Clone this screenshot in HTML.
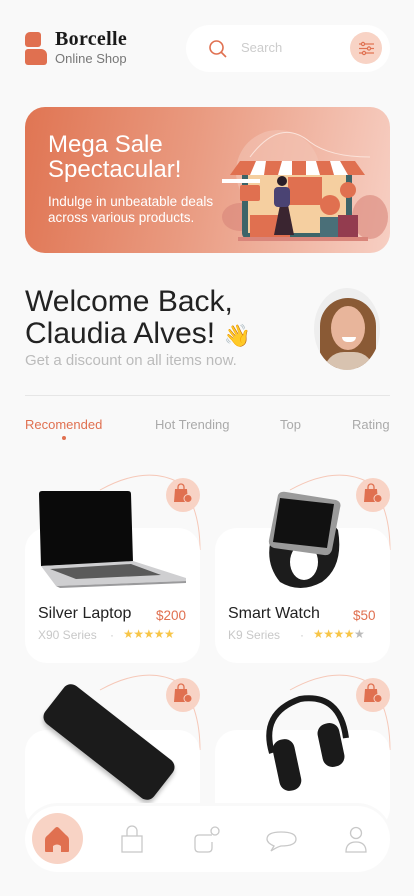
<!DOCTYPE html>
<html><head><meta charset="utf-8"><style>
*{margin:0;padding:0;box-sizing:border-box}
body{width:414px;height:896px;background:#f9f9f9;font-family:"Liberation Sans",sans-serif;position:relative;overflow:hidden}
.a{position:absolute}
.card{position:absolute;background:#fff;border-radius:22px}
.bag{position:absolute;width:34px;height:34px;border-radius:50%;background:#f8d3c5}
.nm{font-size:16px;color:#222}
.pr{font-size:13.5px;color:#e07050}
.sr{font-size:12px;color:#c8c8c8}
.st{font-size:12px;color:#f7c548;letter-spacing:-0.5px}
.tab{position:absolute;top:417px;font-size:13px;color:#aaa}
</style></head><body>
<div class="a" style="left:25px;top:32px;width:16px;height:15px;background:#e07050;border-radius:5px 3px 3px 3px"></div>
<div class="a" style="left:25px;top:49px;width:22px;height:16px;background:#e07050;border-radius:3px 6px 3px 3px"></div>
<div class="a" style="left:55px;top:28px;font-family:'Liberation Serif',serif;font-weight:bold;font-size:20px;color:#1a1a1a;letter-spacing:0.3px">Borcelle</div>
<div class="a" style="left:55px;top:51px;font-size:13px;color:#777">Online Shop</div>
<div class="a" style="left:186px;top:25px;width:204px;height:47px;background:#fff;border-radius:24px"></div>
<svg class="a" style="left:208px;top:39px" width="20" height="20"><circle cx="8.5" cy="8.5" r="6.5" fill="none" stroke="#e07050" stroke-width="1.6"/><line x1="13" y1="13" x2="18" y2="18" stroke="#e07050" stroke-width="1.6"/></svg>
<div class="a" style="left:241px;top:40px;font-size:13px;color:#ccc">Search</div>
<div class="a" style="left:350px;top:32px;width:32px;height:32px;border-radius:50%;background:#f8d3c5"></div>
<svg class="a" style="left:358px;top:41px" width="17" height="15" stroke="#e07050" stroke-width="1.2" fill="#f8d3c5"><line x1="1" y1="3" x2="16" y2="3"/><line x1="1" y1="7.5" x2="16" y2="7.5"/><line x1="1" y1="12" x2="16" y2="12"/><circle cx="5" cy="3" r="1.6"/><circle cx="11" cy="7.5" r="1.6"/><circle cx="6" cy="12" r="1.6"/></svg>
<div class="a" style="left:25px;top:107px;width:365px;height:146px;border-radius:20px;background:linear-gradient(100deg,#e07553 0%,#e99a80 45%,#f7cfc3 100%);overflow:hidden">
 <div class="a" style="left:23px;top:25px;font-size:24px;line-height:25px;color:#fff">Mega Sale<br>Spectacular!</div>
 <div class="a" style="left:23px;top:87px;font-size:13.5px;line-height:16px;color:#fff">Indulge in unbeatable deals<br>across various products.</div>
 <svg class="a" style="left:195px;top:10px" width="170" height="130">
  <circle cx="58" cy="55" r="42" fill="#f4c4b5" opacity=".6"/>
  <path d="M30,40 Q60,0 90,25 Q110,40 150,40" fill="none" stroke="#fbe3da" stroke-width="1"/>
  <ellipse cx="20" cy="100" rx="18" ry="14" fill="#d9857a" opacity=".6"/>
  <ellipse cx="150" cy="100" rx="18" ry="22" fill="#d9857a" opacity=".6"/>
  <rect x="22" y="46" width="110" height="76" rx="6" fill="#3d6468"/>
  <rect x="28" y="54" width="98" height="62" fill="#f5cfa0"/>
  <path d="M10,58 L20,44 L135,44 L145,58 Z" fill="#e07050"/>
  <path d="M30,58 L36,44 L46,44 L44,58Z M58,58 L62,44 L72,44 L72,58Z M86,58 L86,44 L96,44 L100,58Z M114,58 L110,44 L120,44 L128,58Z" fill="#fff"/>
  <rect x="68" y="60" width="34" height="28" fill="#e07050"/>
  <rect x="2" y="62" width="38" height="4" fill="#fff"/>
  <rect x="20" y="68" width="20" height="16" rx="2" fill="#e07050"/>
  <circle cx="128" cy="73" r="8" fill="#e07050"/>
  <circle cx="110" cy="88" r="10" fill="#e07050"/>
  <rect x="30" y="98" width="40" height="22" fill="#e07050"/>
  <path d="M54,118 L60,88 L68,88 L74,118Z" fill="#3a2530"/>
  <rect x="54" y="70" width="16" height="20" rx="4" fill="#4a4373"/>
  <circle cx="62" cy="64" r="5" fill="#2a1e28"/>
  <rect x="100" y="100" width="24" height="20" fill="#4a6f78"/>
  <rect x="118" y="98" width="20" height="22" fill="#933c4f"/>
  <rect x="18" y="120" width="130" height="4" fill="#d9857a"/>
 </svg>
</div>
<div class="a" style="left:25px;top:286px;font-size:30px;line-height:32px;color:#222">Welcome Back,<br>Claudia Alves! <span style="font-family:'Noto Color Emoji','DejaVu Sans',sans-serif;font-size:22px;color:#f2b92e">👋</span></div>
<div class="a" style="left:25px;top:352px;font-size:15px;color:#bbb">Get a discount on all items now.</div>
<div class="a" style="left:314px;top:288px;width:66px;height:82px;border-radius:50%;background:#eee;overflow:hidden">
 <div class="a" style="left:6px;top:10px;width:56px;height:70px;border-radius:28px 28px 10px 10px;background:#8a5a35"></div>
 <div class="a" style="left:17px;top:18px;width:34px;height:44px;border-radius:50%;background:#e8b59b"></div>
 <div class="a" style="left:28px;top:49px;width:14px;height:5px;border-radius:0 0 7px 7px;background:#fff"></div>
 <div class="a" style="left:10px;top:64px;width:50px;height:20px;border-radius:20px 20px 0 0;background:#d8c3b0"></div>
</div>
<div class="a" style="left:25px;top:395px;width:365px;height:1px;background:#e6e6e6"></div>
<div class="tab" style="left:25px;color:#e07050">Recomended</div>
<div class="a" style="left:62px;top:436px;width:4px;height:4px;border-radius:50%;background:#e07050"></div>
<div class="tab" style="left:155px">Hot Trending</div>
<div class="tab" style="left:280px">Top</div>
<div class="tab" style="left:352px">Rating</div>
<svg class="a" style="left:0;top:460px" width="414" height="360" fill="none" stroke="#f6c8b8" stroke-width="1">
 <path d="M100,30 Q145,5 178,22 Q200,45 200,90"/>
 <path d="M290,30 Q335,5 368,22 Q390,45 390,90"/>
 <path d="M100,230 Q145,205 178,222 Q200,245 200,290"/>
 <path d="M290,230 Q335,205 368,222 Q390,245 390,290"/>
</svg>
<div class="card" style="left:25px;top:528px;width:175px;height:135px"></div>
<div class="card" style="left:215px;top:528px;width:175px;height:135px"></div>
<div class="card" style="left:25px;top:730px;width:175px;height:100px"></div>
<div class="card" style="left:215px;top:730px;width:175px;height:100px"></div>
<svg class="a" style="left:36px;top:488px" width="152" height="100">
 <path d="M3,6 Q3,3 6,3 L92,3 Q95,3 95,6 L97,74 L5,78 Z" fill="#0a0a0a"/>
 <path d="M5,78 L97,73 L150,90 L150,93 L20,98 Z" fill="#cfcfd1"/>
 <path d="M14,81 L95,76 L125,87 L40,91Z" fill="#5a5a5a"/>
 <path d="M20,98 L150,93 L150,95 L24,100Z" fill="#9a9a9c"/>
</svg>
<svg class="a" style="left:260px;top:490px" width="90" height="102">
 <path d="M36,30 Q20,20 14,40 Q2,70 20,92 Q40,104 62,92 Q84,76 78,40 L70,30Z" fill="#1c1c1c"/>
 <ellipse cx="44" cy="72" rx="14" ry="18" fill="#fff"/>
 <path d="M18,5 Q20,1 26,2 L76,10 Q82,12 80,18 L72,60 Q70,66 64,65 L14,58 Q8,56 9,50 Z" fill="#9a9a9a"/>
 <path d="M20,8 L74,14 L67,58 L13,52Z" fill="#111"/>
</svg>
<div class="a" style="left:40px;top:718px;width:138px;height:48px;border-radius:9px;background:#1b1b1b;transform:rotate(38deg);box-shadow:2px 3px 4px rgba(0,0,0,.25)"></div>
<svg class="a" style="left:260px;top:693px" width="92" height="110" fill="none">
 <path d="M12,60 Q0,20 40,6 Q80,0 86,45" stroke="#1a1a1a" stroke-width="6"/>
 <rect x="16" y="46" width="22" height="52" rx="10" fill="#1a1a1a" transform="rotate(-12 27 72)"/>
 <rect x="60" y="30" width="22" height="44" rx="10" fill="#1a1a1a" transform="rotate(-12 71 52)"/>
</svg>
<div class="bag" style="left:166px;top:478px"></div>
<div class="bag" style="left:356px;top:478px"></div>
<div class="bag" style="left:166px;top:678px"></div>
<div class="bag" style="left:356px;top:678px"></div>
<svg class="a" style="left:0;top:0" width="414" height="896" fill="#e07050">
 <g id="b"><path d="M175,489 h12 l1,13 h-14z"/><path d="M178,489 v-2 a3,3 0 0 1 6,0 v2" fill="none" stroke="#e07050" stroke-width="1.3"/><circle cx="188" cy="498.5" r="4" stroke="#f8d3c5" stroke-width="1"/></g>
 <use href="#b" x="190"/><use href="#b" y="200"/><use href="#b" x="190" y="200"/>
</svg>
<div class="a nm" style="left:38px;top:605px">Silver Laptop</div>
<div class="a pr" style="left:156px;top:608px">$200</div>
<div class="a sr" style="left:38px;top:628px">X90 Series &nbsp; &nbsp;·</div>
<div class="a st" style="left:123px;top:627px">★★★★★</div>
<div class="a nm" style="left:228px;top:605px">Smart Watch</div>
<div class="a pr" style="left:353px;top:608px">$50</div>
<div class="a sr" style="left:228px;top:628px">K9 Series &nbsp; &nbsp; &nbsp;·</div>
<div class="a st" style="left:313px;top:627px">★★★★<span style="color:#bbb">★</span></div>
<div class="a" style="left:23px;top:803px;width:369px;height:70px;background:#f9f9f9;border-radius:35px"></div>
<div class="a" style="left:25px;top:806px;width:365px;height:66px;background:#fff;border-radius:33px"></div>
<div class="a" style="left:32px;top:813px;width:51px;height:51px;border-radius:50%;background:#f8d3c5"></div>
<svg class="a" style="left:0;top:800px" width="414" height="80" fill="none" stroke="#c8c8c8" stroke-width="1.3">
 <path d="M45,51 V40 Q45,37 48,35 L55,28 Q57,26 59,28 L66,35 Q69,37 69,40 V51 Q69,52 68,52 H61 V46 Q57,43 53,46 V52 H46 Q45,52 45,51Z" fill="#e07050" stroke="none"/>
 <rect x="122" y="36" width="20" height="16"/><path d="M127,36 V31 a5,5 0 0 1 10,0 V36"/>
 <path d="M212,35 H199 Q195,35 195,39 V48 Q195,52 199,52 H208 Q212,52 212,48 V42"/><circle cx="215" cy="31" r="4"/>
 <path d="M271,51 L274,46 Q267,43 267,39 Q267,32 281,32 Q296,32 296,39 Q296,46 281,46 Q277,47 271,51Z"/>
 <circle cx="356" cy="33" r="5.5"/><path d="M346,52 Q346,42 356,42 Q366,42 366,52 Z"/>
</svg>
</body></html>
